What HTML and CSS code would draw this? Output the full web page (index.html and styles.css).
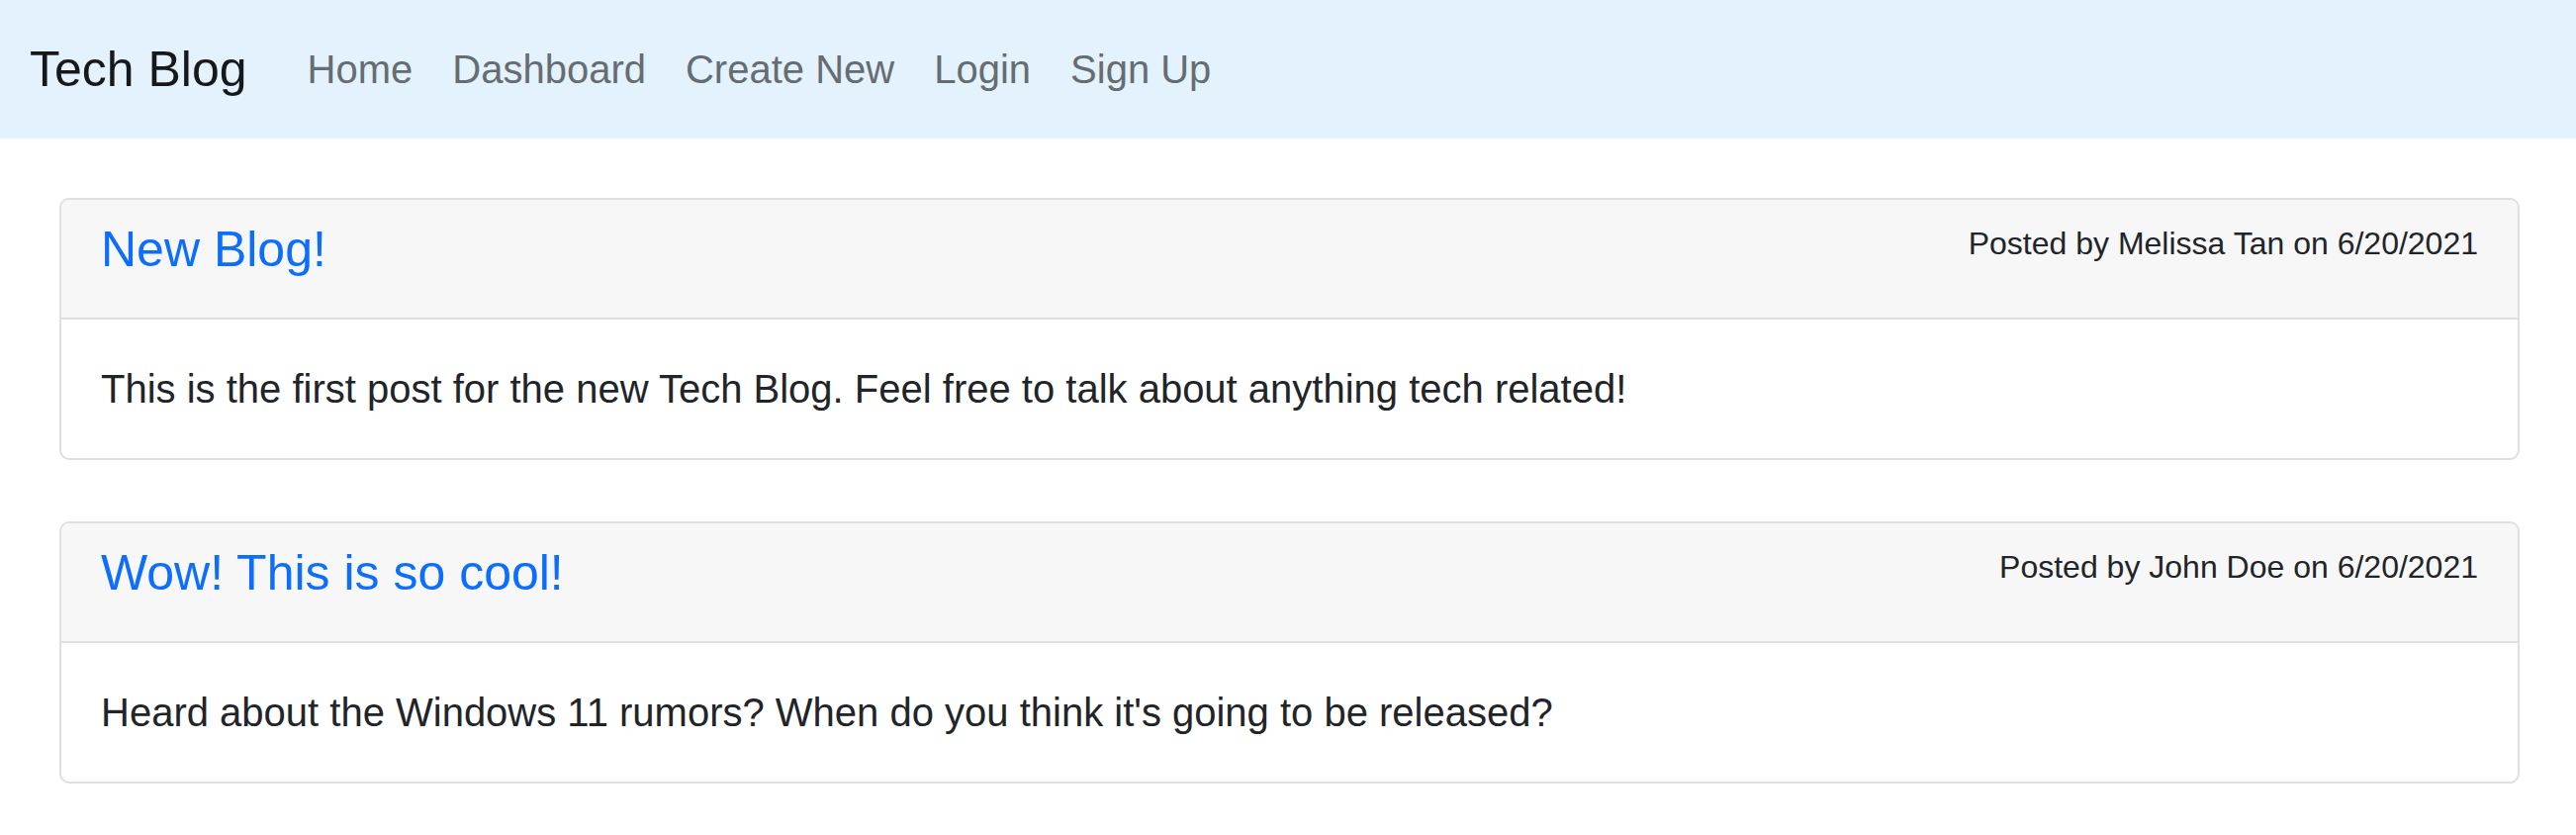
FILE: index.html
```html
<!DOCTYPE html>
<html lang="en">
<head>
<meta charset="utf-8">
<title>Tech Blog</title>
<link rel="stylesheet" href="styles.css">
</head>
<body>
<nav class="navbar">
  <a class="brand" href="#">Tech Blog</a>
  <ul class="nav">
    <li><a class="nav-link" href="#">Home</a></li>
    <li><a class="nav-link" href="#">Dashboard</a></li>
    <li><a class="nav-link" href="#">Create New</a></li>
    <li><a class="nav-link" href="#">Login</a></li>
    <li><a class="nav-link" href="#">Sign Up</a></li>
  </ul>
</nav>
<main class="posts">
  <article class="card">
    <header class="card-header">
      <h5 class="card-title"><a href="#">New Blog!</a></h5>
      <p class="meta">Posted by Melissa Tan on 6/20/2021</p>
    </header>
    <div class="card-body">
      <p>This is the first post for the new Tech Blog. Feel free to talk about anything tech related!</p>
    </div>
  </article>
  <article class="card">
    <header class="card-header">
      <h5 class="card-title"><a href="#">Wow! This is so cool!</a></h5>
      <p class="meta">Posted by John Doe on 6/20/2021</p>
    </header>
    <div class="card-body">
      <p>Heard about the Windows 11 rumors? When do you think it's going to be released?</p>
    </div>
  </article>
</main>
</body>
</html>
```
FILE: styles.css
```css
* { box-sizing: border-box; }
html, body {
  margin: 0;
  padding: 0;
  background: #ffffff;
  font-family: "Liberation Sans", Arial, sans-serif;
  color: #212529;
}
a { text-decoration: none; }

.navbar {
  display: flex;
  align-items: center;
  height: 140px;
  padding: 20px 30px;
  background: #e3f2fd;
}
.brand {
  font-size: 50px;
  line-height: 75px;
  padding: 8px 0;
  color: #171819;
  margin-right: 41px;
}
.nav {
  display: flex;
  list-style: none;
  margin: 0;
  padding: 0;
}
.nav-link {
  display: block;
  padding: 20px 20px;
  font-size: 40px;
  line-height: 60px;
  color: #666d72;
}

.posts {
  padding: 60px 57px 0 60px;
  display: flex;
  flex-direction: column;
  gap: 62px;
}
.card {
  border: 2px solid #dfdfdf;
  border-radius: 10px;
  overflow: hidden;
}
.card-header {
  display: flex;
  justify-content: space-between;
  align-items: flex-start;
  padding: 20px 40px 19px;
  background: #f7f7f7;
  border-bottom: 2px solid #dfdfdf;
}
.card-title {
  margin: 0 0 20px;
  font-size: 50px;
  line-height: 60px;
  font-weight: 400;
}
.card-title a { color: #0d6efd; }
.meta {
  margin: 0;
  font-size: 32px;
  line-height: 48px;
  color: #212529;
}
.card-body {
  padding: 40px;
}
.card-body p {
  margin: 0;
  font-size: 40px;
  line-height: 60px;
}
```
